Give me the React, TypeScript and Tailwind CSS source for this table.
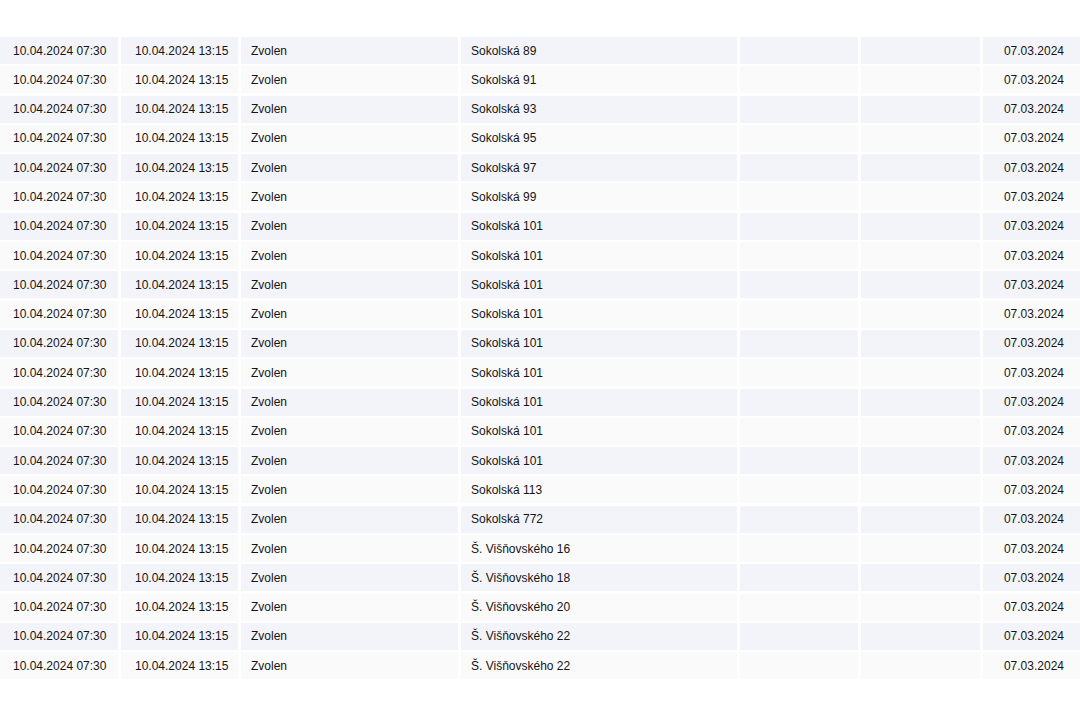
import React from "react";

const streets = [
  "Sokolská 89",
  "Sokolská 91",
  "Sokolská 93",
  "Sokolská 95",
  "Sokolská 97",
  "Sokolská 99",
  "Sokolská 101",
  "Sokolská 101",
  "Sokolská 101",
  "Sokolská 101",
  "Sokolská 101",
  "Sokolská 101",
  "Sokolská 101",
  "Sokolská 101",
  "Sokolská 101",
  "Sokolská 113",
  "Sokolská 772",
  "Š. Višňovského 16",
  "Š. Višňovského 18",
  "Š. Višňovského 20",
  "Š. Višňovského 22",
  "Š. Višňovského 22",
];

export default function App() {
  return (
    <div
      className="w-[1080px] h-[720px] bg-white overflow-hidden text-[12px] text-[#141414]"
      style={{ fontFamily: '"Liberation Sans", Arial, sans-serif' }}
    >
      <div className="pt-[37px] flex flex-col gap-[2.3px]">
        {streets.map((s, i) => {
          const bg = i % 2 === 0 ? "bg-[#f3f4f9]" : "bg-[#fafafb]";
          return (
            <div key={i} className="flex gap-[3px] h-[27px]">
              <div className={`${bg} w-[118px] pl-[13px] flex items-center`}>10.04.2024 07:30</div>
              <div className={`${bg} w-[117px] pl-[14px] flex items-center`}>10.04.2024 13:15</div>
              <div className={`${bg} w-[217px] pl-[10px] flex items-center`}>Zvolen</div>
              <div className={`${bg} w-[276px] pl-[10px] flex items-center`}>{s}</div>
              <div className={`${bg} w-[118px]`} />
              <div className={`${bg} w-[119px]`} />
              <div className={`${bg} flex-1 pr-[16px] flex items-center justify-end`}>07.03.2024</div>
            </div>
          );
        })}
      </div>
    </div>
  );
}
